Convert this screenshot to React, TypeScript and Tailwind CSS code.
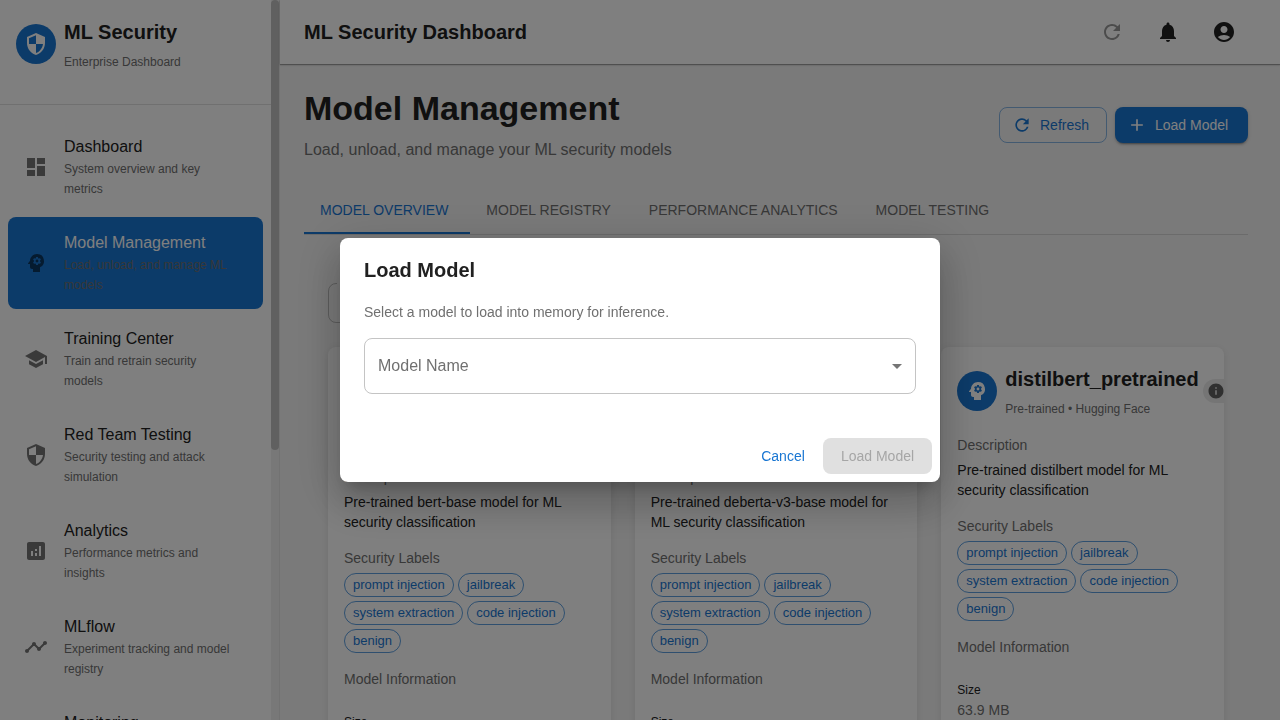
import type { ComponentType } from "react";
import {
  MdAdd,
  MdAnalytics,
  MdArrowDropDown,
  MdDashboard,
  MdInfo,
  MdMonitorHeart,
  MdNotifications,
  MdPsychology,
  MdRefresh,
  MdSchool,
  MdSecurity,
  MdTimeline,
} from "react-icons/md";

type Icon = ComponentType<{ className?: string }>;

const navItems: { title: string; text: string; icon: Icon; active?: boolean }[] = [
  { title: "Dashboard", text: "System overview and key metrics", icon: MdDashboard },
  { title: "Model Management", text: "Load, unload, and manage ML models", icon: MdPsychology, active: true },
  { title: "Training Center", text: "Train and retrain security models", icon: MdSchool },
  { title: "Red Team Testing", text: "Security testing and attack simulation", icon: MdSecurity },
  { title: "Analytics", text: "Performance metrics and insights", icon: MdAnalytics },
  { title: "MLflow", text: "Experiment tracking and model registry", icon: MdTimeline },
  { title: "Monitoring", text: "System health and alerts", icon: MdMonitorHeart },
];

const tabs = ["MODEL OVERVIEW", "MODEL REGISTRY", "PERFORMANCE ANALYTICS", "MODEL TESTING"];

const labels = ["prompt injection", "jailbreak", "system extraction", "code injection", "benign"];

const models = [
  { name: "bert-base_pretrained", base: "bert-base", size: "417.7 MB" },
  { name: "deberta-v3-base_pretrained", base: "deberta-v3-base", size: "351.0 MB" },
  { name: "distilbert_pretrained", base: "distilbert", size: "63.9 MB" },
];

function AccountIcon({ className }: { className?: string }) {
  return (
    <svg viewBox="0 0 24 24" fill="currentColor" aria-hidden="true" className={className}>
      <path d="M12 2C6.48 2 2 6.48 2 12s4.48 10 10 10 10-4.48 10-10S17.52 2 12 2m0 4c1.93 0 3.5 1.57 3.5 3.5S13.93 13 12 13s-3.5-1.57-3.5-3.5S10.07 6 12 6m0 14c-2.03 0-4.43-.82-6.14-2.88C7.55 15.8 9.68 15 12 15s4.45.8 6.14 2.12C16.43 19.18 14.03 20 12 20" />
    </svg>
  );
}

function Avatar({ icon: IconShape }: { icon: Icon }) {
  return (
    <div className="flex size-10 shrink-0 items-center justify-center rounded-full bg-[#1976d2] text-white">
      <IconShape className="size-6" />
    </div>
  );
}

function Sidebar() {
  return (
    <aside className="flex h-full w-[280px] shrink-0 border-r border-black/10 bg-white">
      <div className="min-w-0 flex-1 overflow-hidden">
        <div className="flex items-center gap-2 border-b border-black/12 px-4 pt-4 pb-8">
          <Avatar icon={MdSecurity} />
          <div>
            <p className="text-xl/8 font-bold text-[#212121]">ML Security</p>
            <p className="pt-1 text-xs/5 text-[#707070]">Enterprise Dashboard</p>
          </div>
        </div>
        <nav className="flex flex-col gap-1 px-2 pt-4">
          {navItems.map(({ title, text, icon: IconShape, active }) => (
            <a
              key={title}
              href="#"
              aria-current={active ? "page" : undefined}
              className={`flex items-center gap-4 rounded-lg px-4 py-[14px] ${active ? "bg-[#1976d2]" : ""}`}
            >
              <IconShape className="size-6 shrink-0 text-black/54" />
              <span className="min-w-0 flex-1">
                <span className={`block text-base/6 ${active ? "text-white" : "text-[#212121]"}`}>{title}</span>
                <span className="block pr-3 text-xs/5 text-[#707070]">{text}</span>
              </span>
            </a>
          ))}
        </nav>
      </div>
      <div className="w-2 bg-[#f1f1f1]">
        <div className="h-5/8 rounded-full bg-[#c1c1c1]" />
      </div>
    </aside>
  );
}

function ModelCard({ name, base, size }: { name: string; base: string; size: string }) {
  return (
    <article className="overflow-hidden rounded-lg bg-white p-4 text-sm/5 shadow-[0_2px_8px_rgba(0,0,0,0.1)]">
      <div className="mb-4 flex items-center gap-2">
        <Avatar icon={MdPsychology} />
        <div className="flex items-center gap-1">
          <div>
            <h2 className="text-xl/8 font-bold text-[#212121]">{name}</h2>
            <p className="pt-1 text-xs/5 text-[#707070]">Pre-trained • Hugging Face</p>
          </div>
          <div className="flex h-6 w-20 shrink-0 items-center rounded-full bg-[#ebebeb] pl-1">
            <MdInfo className="size-[18px] text-[#616161]" />
          </div>
        </div>
      </div>
      <h3 className="mb-[5px] text-[#707070]">Description</h3>
      <p className="mb-4 text-[#212121]">Pre-trained {base} model for ML security classification</p>
      <h3 className="mb-[5px] text-[#707070]">Security Labels</h3>
      <ul className="mb-4 flex flex-wrap gap-1">
        {labels.map((label) => (
          <li
            key={label}
            className="flex h-6 items-center rounded-full border border-[#1976d2]/70 px-2 text-[13px]/5 text-[#1976d2]"
          >
            {label}
          </li>
        ))}
      </ul>
      <h3 className="mb-[5px] text-[#707070]">Model Information</h3>
      <dl className="pt-[18px]">
        <dt className="text-xs/5 text-[#212121]">Size</dt>
        <dd className="text-[#707070]">{size}</dd>
      </dl>
    </article>
  );
}

function LoadModelDialog() {
  return (
    <div className="fixed inset-0 flex items-center justify-center bg-black/50 p-8">
      <div
        role="dialog"
        aria-modal="true"
        aria-labelledby="dialog-title"
        className="w-full max-w-[600px] rounded-lg bg-white shadow-[0_11px_15px_-7px_rgba(0,0,0,0.2),0_24px_38px_3px_rgba(0,0,0,0.14),0_9px_46px_8px_rgba(0,0,0,0.12)]"
      >
        <h2 id="dialog-title" className="px-6 py-4 text-xl/8 font-bold text-[#212121]">
          Load Model
        </h2>
        <div className="px-6 pb-9">
          <p className="mb-4 text-sm/5 text-[#707070]">Select a model to load into memory for inference.</p>
          <div className="relative">
            <select
              id="model-name"
              defaultValue=""
              className="block h-14 w-full appearance-none rounded-lg border border-[#c4c4c4] bg-white px-3 text-base/6 text-[#212121]"
            >
              <option value="" />
            </select>
            <label
              htmlFor="model-name"
              className="pointer-events-none absolute inset-y-0 left-[14px] flex items-center text-base/6 text-[#707070]"
            >
              Model Name
            </label>
            <MdArrowDropDown className="pointer-events-none absolute top-4 right-[7px] size-6 text-[#757575]" />
          </div>
        </div>
        <div className="flex justify-end gap-2 p-2 text-sm/6">
          <button type="button" className="h-9 min-w-16 rounded-lg px-2 text-[#1976d2]">
            Cancel
          </button>
          <button type="button" disabled className="h-9 min-w-[109px] rounded-lg bg-[#e0e0e0] px-4 text-[#a6a6a6]">
            Load Model
          </button>
        </div>
      </div>
    </div>
  );
}

export default function App() {
  return (
    <div className="flex h-screen overflow-hidden bg-[#f5f5f5] font-['Liberation_Sans',Arial,sans-serif]">
      <Sidebar />
      <div className="flex min-w-0 flex-1 flex-col">
        <header className="z-0 flex h-16 shrink-0 items-center justify-between bg-white pr-8 pl-6 shadow-[0_1px_3px_rgba(0,0,0,0.12),0_1px_1px_rgba(0,0,0,0.3)]">
          <p className="text-xl/8 font-bold text-[#212121]">ML Security Dashboard</p>
          <div className="flex gap-2">
            <button type="button" aria-label="Refresh" className="flex size-12 items-center justify-center text-[#999]">
              <MdRefresh className="size-6" />
            </button>
            <button type="button" aria-label="Notifications" className="flex size-12 items-center justify-center text-[#212121]">
              <MdNotifications className="size-6" />
            </button>
            <button type="button" aria-label="Account" className="flex size-12 items-center justify-center text-[#212121]">
              <AccountIcon className="size-6" />
            </button>
          </div>
        </header>
        <main className="min-h-0 flex-1 overflow-hidden pt-6 pr-8 pl-6">
          <div className="mb-6 flex items-center justify-between">
            <div>
              <h1 className="mb-[10px] text-[34px]/10 font-bold text-[#212121]">Model Management</h1>
              <p className="text-base/6 text-[#707070]">Load, unload, and manage your ML security models</p>
            </div>
            <div className="flex gap-2 text-sm/6">
              <button
                type="button"
                className="flex h-9 min-w-[108px] items-center gap-2 rounded-lg border border-[#1976d2]/50 px-3 text-[#1976d2]"
              >
                <MdRefresh className="size-5" />
                Refresh
              </button>
              <button
                type="button"
                className="flex h-9 min-w-[133px] items-center gap-2 rounded-lg bg-[#1976d2] px-3 text-white shadow-[0_3px_1px_-2px_rgba(0,0,0,0.2),0_2px_2px_rgba(0,0,0,0.14),0_1px_5px_rgba(0,0,0,0.12)]"
              >
                <MdAdd className="size-5" />
                Load Model
              </button>
            </div>
          </div>
          <div role="tablist" className="flex border-b border-black/12 text-sm/5">
            {tabs.map((tab, index) => (
              <button
                key={tab}
                type="button"
                role="tab"
                aria-selected={index === 0}
                className={`h-12 border-y-2 border-t-transparent pr-[22px] pl-4 ${
                  index === 0 ? "border-b-[#1976d2] text-[#1976d2]" : "border-b-transparent text-[#707070]"
                }`}
              >
                {tab}
              </button>
            ))}
          </div>
          <div className="px-6 pt-12">
            <div className="relative mb-6 w-[200px]">
              <select
                id="model-filter"
                className="block h-10 w-full appearance-none rounded-lg border border-black/23 px-3 text-base/6 text-[#212121]"
              >
                <option>All</option>
              </select>
              <label htmlFor="model-filter" className="absolute -top-2 left-[9px] bg-[#f5f5f5] px-1 text-xs/4 text-[#707070]">
                Status
              </label>
            </div>
            <div className="grid grid-cols-3 gap-6">
              {models.map((model) => (
                <ModelCard key={model.name} {...model} />
              ))}
            </div>
          </div>
        </main>
      </div>
      <LoadModelDialog />
    </div>
  );
}
